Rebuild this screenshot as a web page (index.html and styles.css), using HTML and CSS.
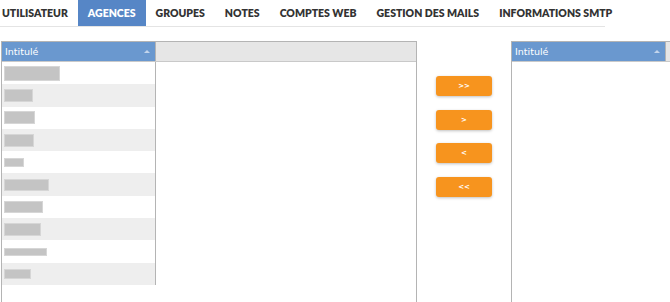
FILE: index.html
```html
<!DOCTYPE html>
<html>
<head>
  <meta charset="UTF-8">
  <title>Agences</title>
  <link rel="stylesheet" href="styles.css">
</head>
<body>
  <!-- Onglets -->
  <div class="tabs">
    <span class="tab first">UTILISATEUR</span>
    <span class="sep"></span>
    <span class="tab active">AGENCES</span>
    <span class="sep"></span>
    <span class="tab">GROUPES</span>
    <span class="sep"></span>
    <span class="tab">NOTES</span>
    <span class="sep"></span>
    <span class="tab">COMPTES WEB</span>
    <span class="sep"></span>
    <span class="tab">GESTION DES MAILS</span>
    <span class="sep"></span>
    <span class="tab">INFORMATIONS SMTP</span>
  </div>

  <div class="main">
    <!-- Agences disponibles -->
    <div class="grid left-grid">
      <div class="grid-head">
        <div class="col-head">Intitulé<span class="sort"></span></div>
        <div class="col-fill"></div>
      </div>
      <div class="grid-body">
        <div class="col-rows">
          <div class="row"><span class="blur" style="width:56px;height:15px"></span></div>
          <div class="row alt"><span class="blur" style="width:29px;height:13px"></span></div>
          <div class="row"><span class="blur" style="width:31px;height:13px"></span></div>
          <div class="row alt"><span class="blur" style="width:30px;height:13px"></span></div>
          <div class="row"><span class="blur" style="width:20px;height:9px"></span></div>
          <div class="row alt"><span class="blur" style="width:45px;height:12px"></span></div>
          <div class="row"><span class="blur" style="width:39px;height:12px"></span></div>
          <div class="row alt"><span class="blur" style="width:37px;height:13px"></span></div>
          <div class="row"><span class="blur" style="width:43px;height:8px"></span></div>
          <div class="row alt"><span class="blur" style="width:27px;height:10px"></span></div>
        </div>
      </div>
    </div>

    <!-- Boutons de transfert -->
    <div class="actions">
      <button class="move-btn">&gt;&gt;</button>
      <button class="move-btn">&gt;</button>
      <button class="move-btn">&lt;</button>
      <button class="move-btn">&lt;&lt;</button>
    </div>

    <!-- Agences sélectionnées -->
    <div class="grid right-grid">
      <div class="grid-head">
        <div class="col-head">Intitulé<span class="sort"></span></div>
        <div class="col-fill"></div>
      </div>
    </div>
  </div>
</body>
</html>
```

FILE: styles.css
```css
:root {
  --tab-blue: #5686c6;
  --head-blue: #6a98cf;
  --orange: #f7941e;
  --grid-border: #b4b4b4;
  --text-dark: #333;
}

html, body {
  margin: 0;
  padding: 0;
  overflow: hidden;
  background: #fff;
}

body {
  width: 670px;
  height: 302px;
  font-family: 'Lato', sans-serif;
}

/* Onglets */
.tabs {
  display: flex;
  align-items: center;
  width: 605px;
  height: 26px;
  border-bottom: 1px solid #e4e4e4;
}

.tab {
  padding: 0 10px;
  line-height: 26px;
  font-size: 10.5px;
  font-weight: 800;
  color: var(--text-dark);
  white-space: nowrap;
}

.tab.first {
  padding-left: 2px;
}

.tab.active {
  background-color: var(--tab-blue);
  color: #fff;
}

.sep {
  width: 1px;
  height: 11px;
  background-color: #aaa;
}

/* Zone principale */
.main {
  display: flex;
  margin-top: 14px;
  height: 261px;
}

.grid {
  border: 1px solid var(--grid-border);
  border-bottom: none;
  display: flex;
  flex-direction: column;
  flex-shrink: 0;
}

.left-grid {
  margin-left: 1px;
  width: 414px;
}

.right-grid {
  width: 170px;
}

.grid-head {
  display: flex;
  height: 19px;
  border-bottom: 1px solid #c9c9c9;
}

.col-head {
  position: relative;
  width: 150px;
  padding-left: 3px;
  border-right: 1px solid var(--grid-border);
  background-color: var(--head-blue);
  color: #fff;
  font-family: 'DejaVu Sans', sans-serif;
  font-size: 9.5px;
  line-height: 19px;
}

.sort {
  position: absolute;
  right: 5px;
  top: 8px;
  width: 0;
  height: 0;
  border-left: 3px solid transparent;
  border-right: 3px solid transparent;
  border-bottom: 3px solid #c3d5ec;
}

.col-fill {
  flex: 1;
  background-color: #e6e6e6;
}

.grid-body {
  flex: 1;
  display: flex;
}

.col-rows {
  width: 153px;
  border-right: 1px solid var(--grid-border);
  align-self: flex-start;
}

.row {
  height: 22.3px;
  display: flex;
  align-items: center;
  padding-left: 2px;
}

.row.alt {
  background-color: #eeeeee;
}

.blur {
  display: inline-block;
  background-color: #c4c4c4;
  border: 1px solid #d6d6d6;
  box-sizing: border-box;
}

/* Boutons */
.actions {
  width: 94px;
  flex-shrink: 0;
  display: flex;
  flex-direction: column;
  align-items: center;
  gap: 13.7px;
  padding-top: 35px;
}

.move-btn {
  width: 56px;
  height: 20px;
  padding: 0;
  border: none;
  border-radius: 3px;
  background-color: var(--orange);
  color: #fff;
  font-family: 'DejaVu Sans', sans-serif;
  font-size: 7px;
  font-weight: bold;
  box-shadow: 0 1px 3px rgba(0, 0, 0, 0.25);
  cursor: pointer;
}
```
